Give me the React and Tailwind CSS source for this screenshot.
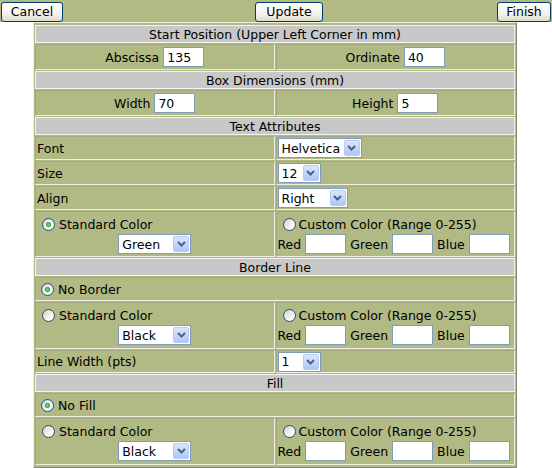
import React from "react";

const OLIVE = "bg-[#b1b984]";

function Btn({ w, children, className = "" }) {
  return (
    <button
      className={`${w} h-[20px] border border-[#003c74] rounded-[3px] bg-[linear-gradient(180deg,#ffffff_0%,#f4f3ee_60%,#dedbcb_100%)] text-[12.5px] leading-none text-black flex items-center justify-center pt-px ${className}`}
    >
      {children}
    </button>
  );
}

function Radio({ checked }) {
  return (
    <span className="inline-flex w-[13px] h-[13px] rounded-full border border-[#1c5180] bg-[linear-gradient(135deg,#d2d2ca_0%,#f4f4f0_60%,#ffffff_100%)] items-center justify-center shrink-0">
      {checked && (
        <span className="w-[5px] h-[5px] rounded-full bg-[radial-gradient(circle,#7ee37e_0%,#21a121_70%)]" />
      )}
    </span>
  );
}

function Chevron() {
  return (
    <svg width="9" height="6" viewBox="0 0 9 6">
      <path d="M1 1 L4.5 4.5 L8 1" fill="none" stroke="#4d6185" strokeWidth="2" />
    </svg>
  );
}

function Select({ w, value }) {
  return (
    <div className={`${w} h-[20px] border border-[#7f9db9] bg-white flex items-center shrink-0`}>
      <span className="flex-1 pl-[3px] pt-px leading-[16px] text-black whitespace-nowrap">{value}</span>
      <span className="w-[16px] h-[16px] mr-px rounded-[2px] border border-[#b8cbf2] bg-[linear-gradient(180deg,#dbe6fd_0%,#c1d3fb_60%,#b0c6f6_100%)] flex items-center justify-center shrink-0">
        <Chevron />
      </span>
    </div>
  );
}

function Input({ value = "" }) {
  return (
    <div className="w-[41px] h-[20px] border border-[#7f9db9] bg-white pl-[3px] pt-px flex items-center leading-[16px] text-black shrink-0">
      {value}
    </div>
  );
}

const cell =
  "border border-t-[#a3a87f] border-l-[#a3a87f] border-r-[#eef0e2] border-b-[#eef0e2] px-px";

const lbl = "leading-none pt-[2px] whitespace-nowrap";

function Header({ children }) {
  return (
    <div className="h-[18px] bg-[#c8c8c8] border border-[#f4f4f0] flex items-center justify-center">
      <span className={lbl}>{children}</span>
    </div>
  );
}

function ColorRow({ stdValue, checked, h }) {
  return (
    <div className={`grid grid-cols-2 gap-px ${h}`}>
      <div className={`${cell} flex flex-col pt-[3px]`}>
        <div className="h-[19px] flex items-center pl-[5px] gap-[4px]">
          <Radio checked={checked} />
          <span className={lbl}>Standard Color</span>
        </div>
        <div className="flex justify-center">
          <Select w="w-[73px]" value={stdValue} />
        </div>
      </div>
      <div className={`${cell} flex flex-col pt-[3px]`}>
        <div className="h-[19px] flex items-center pl-[5px] gap-[3px]">
          <Radio />
          <span className={lbl}>Custom Color (Range 0-255)</span>
        </div>
        <div className="flex items-center gap-[4px]">
          <span className={lbl}>Red</span>
          <Input />
          <span className={lbl}>Green</span>
          <Input />
          <span className={lbl}>Blue</span>
          <Input />
        </div>
      </div>
    </div>
  );
}

function LabelSelectRow({ label, w, value, h = "h-[24px]" }) {
  return (
    <div className={`grid grid-cols-2 gap-px ${h}`}>
      <div className={`${cell} flex items-center`}>
        <span className={lbl}>{label}</span>
      </div>
      <div className={`${cell} flex items-center`}>
        <Select w={w} value={value} />
      </div>
    </div>
  );
}

function FullRadioRow({ label }) {
  return (
    <div className={`h-[24px] ${cell} flex items-center pl-[5px] gap-[4px]`}>
      <Radio checked />
      <span className={lbl}>{label}</span>
    </div>
  );
}

function PairRow({ a, av, b, bv }) {
  return (
    <div className="grid grid-cols-2 gap-px h-[26px]">
      <div className={`${cell} flex items-center justify-center gap-[4px]`}>
        <span className={lbl}>{a}</span>
        <Input value={av} />
      </div>
      <div className={`${cell} flex items-center justify-center gap-[4px]`}>
        <span className={lbl}>{b}</span>
        <Input value={bv} />
      </div>
    </div>
  );
}

export default function App() {
  return (
    <div className="w-[552px] h-[468px] overflow-hidden bg-white text-black text-[12.5px] font-['DejaVu_Sans','Verdana',sans-serif]">
      <div className={`h-[22px] ${OLIVE} flex items-start pt-[2px] pl-px pr-px`}>
        <Btn w="w-[62px]">Cancel</Btn>
        <Btn w="w-[68px]" className="ml-[192px]">Update</Btn>
        <Btn w="w-[54px]" className="ml-auto">Finish</Btn>
      </div>
      <div
        className={`ml-[33px] w-[484px] border border-t-[#eef0e2] border-l-[#eef0e2] border-r-[#8a8e6e] border-b-[#8a8e6e] ${OLIVE} px-px pt-[2px] pb-[2px] flex flex-col gap-px`}
      >
        <Header>Start Position (Upper Left Corner in mm)</Header>
        <PairRow a="Abscissa" av="135" b="Ordinate" bv="40" />
        <Header>Box Dimensions (mm)</Header>
        <PairRow a="Width" av="70" b="Height" bv="5" />
        <Header>Text Attributes</Header>
        <LabelSelectRow label="Font" w="w-[84px]" value="Helvetica" />
        <LabelSelectRow label="Size" w="w-[43px]" value="12" />
        <LabelSelectRow label="Align" w="w-[70px]" value="Right" />
        <ColorRow stdValue="Green" checked h="h-[46px]" />
        <Header>Border Line</Header>
        <FullRadioRow label="No Border" />
        <ColorRow stdValue="Black" h="h-[47px]" />
        <LabelSelectRow label="Line Width (pts)" w="w-[43px]" value="1" h="h-[23px]" />
        <Header>Fill</Header>
        <FullRadioRow label="No Fill" />
        <ColorRow stdValue="Black" h="h-[47px]" />
      </div>
    </div>
  );
}
